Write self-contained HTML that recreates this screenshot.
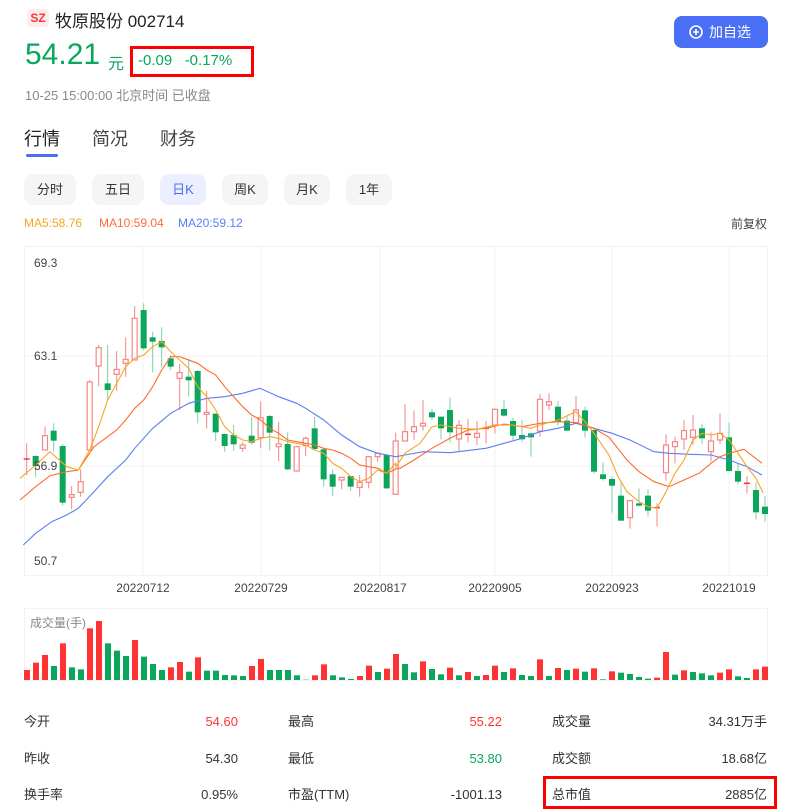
<!DOCTYPE html>
<html><head><meta charset="utf-8">
<style>
*{margin:0;padding:0;box-sizing:border-box}
body{width:791px;height:812px;background:#fff;font-family:"Liberation Sans","Noto Sans CJK SC",sans-serif;color:#333;position:relative;overflow:hidden}
.a{position:absolute;white-space:nowrap}
.btn{position:absolute;top:174px;height:31px;background:#f5f5f5;border-radius:9px;font-size:13px;color:#333;text-align:center;line-height:31px}
.lab{font-size:13px;color:#333;line-height:18px;height:18px}
.val{font-size:13px;text-align:right;line-height:18px;height:18px;font-family:"Liberation Sans","Noto Sans CJK SC",sans-serif}
</style></head><body>
<div class="a" style="left:27px;top:9px;width:22px;height:18px;background:#fdecec;border-radius:3px;color:#f33;font-size:12px;font-weight:bold;line-height:18px;text-align:center">SZ</div>
<div class="a" style="left:55px;top:7px;font-size:17px;color:#222">牧原股份 002714</div>
<div class="a" style="left:25px;top:38px;font-size:30px;color:#0aa65c;letter-spacing:0px">54.21</div>
<div class="a" style="left:108px;top:50px;font-size:16px;color:#0aa65c">元</div>
<div class="a" style="left:130px;top:46px;width:124px;height:31px;border:3px solid #f00"></div>
<div class="a" style="left:138px;top:52px;font-size:15px;color:#0aa65c">-0.09&nbsp;&nbsp;&nbsp;-0.17%</div>
<div class="a" style="left:674px;top:16px;width:94px;height:32px;background:#4a6ef5;border-radius:8px;color:#fff;font-size:14px;line-height:32px">
<svg style="position:absolute;left:15px;top:9px" width="14" height="14" viewBox="0 0 14 14"><circle cx="7" cy="7" r="6" fill="none" stroke="#fff" stroke-width="1.6"/><path d="M7 4v6M4 7h6" stroke="#fff" stroke-width="1.6"/></svg>
<span style="position:absolute;left:35px">加自选</span></div>
<div class="a" style="left:25px;top:85px;font-size:13px;color:#888">10-25 15:00:00 北京时间 已收盘</div>
<div class="a" style="left:24px;top:125px;font-size:18px;color:#222">行情</div>
<div class="a" style="left:92px;top:125px;font-size:18px;color:#444">简况</div>
<div class="a" style="left:160px;top:125px;font-size:18px;color:#444">财务</div>
<div class="a" style="left:26px;top:154px;width:32px;height:3px;background:#4a6ef5;border-radius:2px"></div>
<div class="btn" style="left:24px;width:52px">分时</div>
<div class="btn" style="left:92px;width:52px">五日</div>
<div class="btn" style="left:160px;width:46px;background:#ebefff;color:#4a6ef5">日K</div>
<div class="btn" style="left:222px;width:46px">周K</div>
<div class="btn" style="left:284px;width:46px">月K</div>
<div class="btn" style="left:346px;width:46px">1年</div>
<div class="a" style="left:24px;top:216px;font-size:12px;color:#f5a623">MA5:58.76</div>
<div class="a" style="left:99px;top:216px;font-size:12px;color:#ff6b3d">MA10:59.04</div>
<div class="a" style="left:178px;top:216px;font-size:12px;color:#5b7ef5">MA20:59.12</div>
<div class="a" style="left:731px;top:215px;font-size:12px;color:#444">前复权</div>
<svg id="ch" class="a" style="left:0;top:0" width="791" height="700"></svg>
<div class="a" style="left:30px;top:614px;font-size:12px;color:#888">成交量(手)</div>
<div id="stats"></div>
<div class="a" style="left:543px;top:776px;width:234px;height:33px;border:3px solid #f00"></div>
<script>
var s='';
function L(x1,y1,x2,y2,c,w){s+='<line x1="'+x1+'" y1="'+y1+'" x2="'+x2+'" y2="'+y2+'" stroke="'+c+'" stroke-width="'+(w||1)+'"/>';}
function T(x,y,t,a){s+='<text x="'+x+'" y="'+y+'" font-size="12" fill="#444" text-anchor="'+(a||'start')+'" font-family="Liberation Sans,sans-serif">'+t+'</text>';}
var g='#f2f2f2';
s+='<rect x="24.5" y="246.5" width="743" height="329" fill="none" stroke="'+g+'"/>';
L(24,356,767,356,g);L(24,466,767,466,g);
[143,261,380,495,612,729].forEach(function(x){L(x,246,x,576,g)});
s+='<rect x="24.5" y="608.5" width="743" height="72" fill="none" stroke="'+g+'"/>';
var C=[[20,'r',657,657,610,705],[47,'g',648,678,645,712],[75,'r',587,630,560,630],[101,'g',572,602,550,635],[128,'g',618,788,612,797],[155,'r',764,772,738,808],[182,'r',725,757,688,770],[209,'r',426,630,420,632],[236,'r',323,378,315,438],[263,'g',430,450,315,480],[290,'r',388,403,333,453],[317,'r',358,370,292,410],[344,'r',235,360,198,360],[371,'g',210,325,190,330],[398,'g',292,305,275,397],[425,'g',303,322,262,382],[452,'g',355,380,345,390],[479,'r',398,415,372,510],[506,'g',410,421,362,470],[533,'g',393,517,390,550],[560,'r',517,523,453,566],[587,'g',521,577,520,603],[614,'g',582,618,580,635],[641,'g',585,613,555,632],[668,'r',615,625,605,636],[695,'g',587,608,530,613],[722,'r',533,593,484,625],[749,'g',528,578,525,632],[776,'r',612,620,546,663],[803,'g',612,688,577,690],[830,'r',620,693,618,695],[857,'r',595,617,590,648],[884,'g',565,627,530,628],[911,'g',628,718,625,740],[938,'g',703,740,688,768],[965,'r',712,720,710,748],[992,'g',708,740,708,753],[1019,'r',727,742,705,770],[1046,'r',650,727,648,745],[1073,'r',640,650,638,665],[1100,'g',645,745,643,747],[1127,'r',603,763,578,763]];
var C2=[[45,'r',575,603,492,605],[72,'r',560,575,512,600],[99,'r',550,558,480,572],[126,'g',517,532,507,540],[153,'g',530,565,530,598],[180,'g',510,577,472,608],[207,'r',556,597,540,633],[234,'r',583,587,537,608],[261,'r',580,592,543,615],[288,'r',565,568,543,610],[315,'r',508,555,505,580],[342,'g',507,527,480,530],[369,'g',543,587,533,600],[396,'g',585,598,540,607],[423,'g',580,592,578,650],[450,'r',478,573,462,590],[477,'r',485,495,460,510],[504,'g',500,545,483,557],[531,'g',542,572,528,572],[558,'r',510,548,468,550],[585,'g',511,572,500,592],[612,'g',570,695,568,700],[639,'g',703,717,667,722],[666,'g',717,737,710,818],[693,'g',767,842,725,842],[720,'r',782,833,780,866],[747,'g',790,797,745,800],[774,'g',767,812,748,830],[801,'r',803,805,790,860],[828,'r',615,698,583,722],[855,'r',605,620,590,670],[882,'r',572,597,540,630],[909,'r',570,592,525,615],[936,'g',565,595,552,613],[963,'r',603,635,577,665],[990,'r',580,600,520,612],[1017,'g',592,693,547,695],[1044,'g',693,725,672,733],[1071,'r',730,733,708,760],[1098,'g',750,817,727,838],[1125,'g',800,822,768,845]];
var all=C.map(function(c){return [20+c[0]/3].concat(c.slice(1))}).concat(C2.map(function(c){return [390+c[0]/3].concat(c.slice(1))}));
function Y(v){return 240+v/3}
function P(a,ox,oy){return a.map(function(p){return (ox+p[0]/3).toFixed(1)+','+(oy+p[1]/3).toFixed(1)}).join(' ')}
var m5a=[[0,715],[47,675],[90,635],[140,680],[175,690],[209,630],[236,560],[263,480],[290,430],[317,380],[344,355],[371,345],[398,320],[425,305],[452,335],[479,360],[506,385],[533,440],[560,470],[587,510],[614,560],[641,585],[668,600],[695,605],[722,595],[749,590],[776,595],[803,605],[830,610],[857,615],[884,630],[911,640],[938,670],[965,685],[992,710],[1019,725],[1046,715],[1073,690],[1100,700],[1127,670]];
var m5b=[[18,680],[45,640],[90,610],[126,560],[153,555],[207,565],[261,568],[315,555],[369,555],[423,565],[450,555],[504,540],[558,515],[585,545],[612,580],[657,645],[684,710],[711,755],[747,785],[774,800],[801,805],[828,755],[855,700],[882,660],[909,600],[936,580],[963,585],[990,580],[1017,600],[1044,640],[1071,680],[1098,715],[1120,760]];
var m10a=[[0,780],[47,740],[90,707],[140,695],[175,690],[222,620],[263,590],[290,570],[317,540],[344,505],[371,480],[398,440],[425,390],[452,350],[479,350],[533,370],[560,390],[587,405],[614,440],[641,470],[668,500],[695,525],[722,540],[749,565],[776,580],[803,600],[830,605],[857,610],[884,615],[911,625],[938,630],[965,640],[992,655],[1019,675],[1046,680],[1073,685],[1100,700],[1127,688]];
var m10b=[[18,685],[30,685],[72,660],[126,625],[180,595],[234,570],[288,565],[342,552],[396,560],[450,550],[504,545],[558,548],[612,565],[657,592],[711,660],[747,695],[792,725],[837,740],[882,720],[927,700],[963,670],[990,650],[1017,640],[1062,628],[1116,670]];
var m20a=[[10,915],[47,880],[95,845],[140,825],[175,805],[222,755],[263,710],[317,660],[344,625],[398,565],[452,520],[506,490],[560,475],[614,470],[668,460],[720,445],[776,470],[830,490],[857,505],[911,540],[965,585],[1019,620],[1073,640],[1127,650]];
var m20b=[[18,650],[45,645],[99,635],[180,638],[288,625],[342,610],[396,595],[450,575],[504,565],[558,550],[612,565],[666,580],[720,600],[792,635],[837,640],[900,643],[963,645],[1017,660],[1071,680],[1116,705]];
function PL(a,b,c){s+='<polyline fill="none" stroke="'+c+'" stroke-width="1.1" points="'+P(a,20,240)+' '+P(b,390,240)+'"/>';}
all.forEach(function(c){
 var x=c[0],col=c[1]=='r',o=Y(c[2]),cl=Y(c[3]),h=Y(c[4]),l=Y(c[5]);
 if(col){
  L(x,h,x,o,'#f58585');L(x,cl,x,l,'#f58585');
  var hh=Math.max(cl-o,0.8);
  if(hh<2){L(x-3,o,x+3,o,'#f33',1.5)}else s+='<rect x="'+(x-2.5)+'" y="'+o+'" width="5" height="'+hh+'" fill="#fff" stroke="#f58585" stroke-width="1.2"/>';
 }else{
  L(x,h,x,l,'#7fd0a6');
  s+='<rect x="'+(x-3)+'" y="'+o+'" width="6" height="'+Math.max(cl-o,1.5)+'" fill="#0aa65c"/>';
 }
});
PL(m20a,m20b,'#5b7ef5');PL(m10a,m10b,'#ff6b2c');PL(m5a,m5b,'#f5a623');
T(34,267,'69.3');T(34,360,'63.1');T(34,470,'56.9');T(34,565,'50.7');
[['20220712',143],['20220729',261],['20220817',380],['20220905',495],['20220923',612],['20221019',729]].forEach(function(d){T(d[1],592,d[0],'middle')});
var V='r210 r188 r165 g198 r130 g202 g208 r85 r63 g130 g152 g168 r120 g170 g192 g210 r202 r186 g215 r172 g212 g212 g225 g226 g228 r198 r177 g210 g210 g210 g226 g239 r226 r193 g226 g232 g237 r228 r197 g216 r206 r162 g192 g217 r184 g207 g223 r203 g226 r216 g228 r225 r197 g216 r205 g225 g228 r178 g228 r204 g210 r206 g215 r205 g238 r214 g218 g222 g231 g236 r233 r156 g224 r211 g216 g220 g226 r218 r208 g229 g234 r208 r200'.split(' ');
V.forEach(function(v,i){var x=27+i*9,t=600+(+v.slice(1))/3;s+='<rect x="'+(x-3)+'" y="'+t+'" width="6" height="'+(680-t)+'" fill="'+(v[0]=='r'?'#ff3333':'#0aa65c')+'"/>';});
document.getElementById('ch').innerHTML=s;
var R=[[722,['今开','54.60','#f33'],['最高','55.22','#f33'],['成交量','34.31万手','#333']],[759,['昨收','54.30','#333'],['最低','53.80','#0aa65c'],['成交额','18.68亿','#333']],[795,['换手率','0.95%','#333'],['市盈(TTM)','-1001.13','#333'],['总市值','2885亿','#333']]];
var cols=[[24,238],[288,502],[552,767]],h='';
R.forEach(function(r){for(var k=0;k<3;k++){var c=r[k+1];h+='<div class="a lab" style="left:'+cols[k][0]+'px;top:'+(r[0]-9)+'px">'+c[0]+'</div><div class="a val" style="right:'+(791-cols[k][1])+'px;top:'+(r[0]-9)+'px;color:'+c[2]+'">'+c[1]+'</div>';}});
document.getElementById('stats').innerHTML=h;
</script>
</body></html>
